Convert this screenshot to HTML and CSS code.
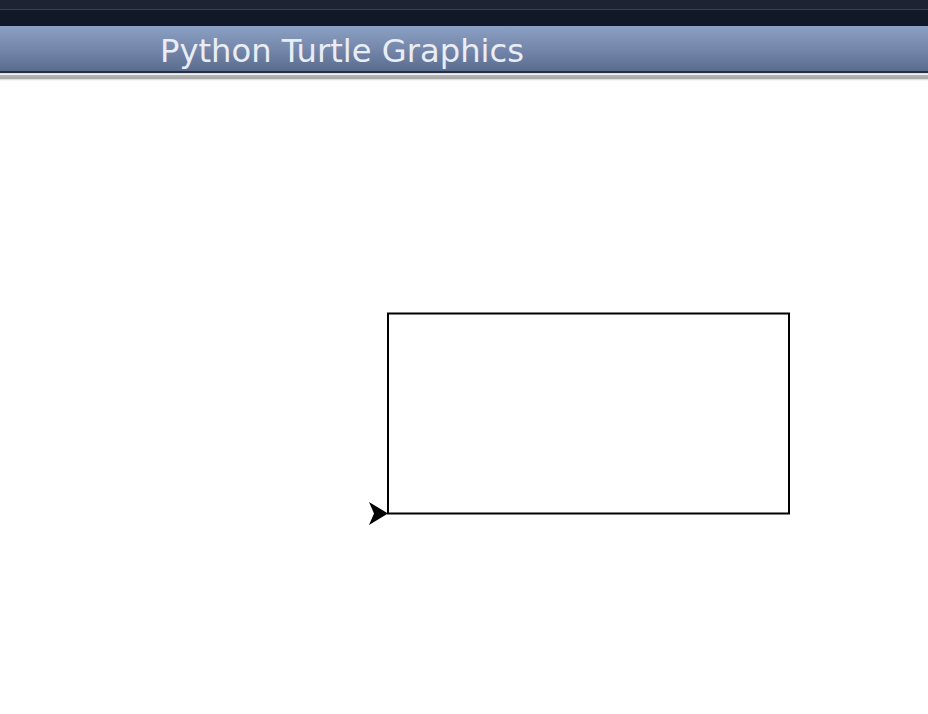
FILE: index.html
```html
<!DOCTYPE html>
<html>
<head>
<meta charset="utf-8">
<title>Python Turtle Graphics</title>
<link rel="stylesheet" href="styles.css">
</head>
<body>
<div class="window">
  <div class="topbar">
    <div class="topbar-upper"></div>
    <div class="topbar-lower"></div>
  </div>
  <div class="titlebar">
    <span class="title">Python Turtle Graphics</span>
  </div>
  <div class="edge"></div>
  <div class="canvas">
    <svg class="drawing" width="928" height="633" viewBox="0 81 928 633" xmlns="http://www.w3.org/2000/svg">
      <rect x="388" y="313.5" width="401" height="200" fill="none" stroke="#000" stroke-width="2"/>
      <polygon points="388,513.5 369,502 374,513.5 369,525" fill="#000"/>
    </svg>
  </div>
</div>
</body>
</html>
```

FILE: styles.css
```css
html, body {
  margin: 0;
  padding: 0;
  background: #ffffff;
}

.window {
  width: 928px;
  height: 714px;
  display: flex;
  flex-direction: column;
  overflow: hidden;
}

.topbar {
  display: flex;
  flex-direction: column;
  flex: none;
}

.topbar-upper {
  height: 9px;
  background: #1e2334;
  border-bottom: 1px solid #3c4353;
}

.topbar-lower {
  height: 16px;
  background: #111828;
}

.titlebar {
  flex: none;
  height: 45px;
  background: linear-gradient(to bottom, #8ba0c4 0%, #7588ab 50%, #5a6d8f 100%);
  border-bottom: 2px solid #283042;
  display: flex;
  align-items: center;
  padding-left: 160px;
}

.title {
  font-family: "DejaVu Sans", "Liberation Sans", sans-serif;
  font-size: 32.2px;
  color: #e9edf5;
  line-height: 1;
  margin-top: 6px;
}

.edge {
  flex: none;
  height: 8px;
  background: linear-gradient(to bottom, #dcdcdc 0px, #dcdcdc 1px, #f2f2f2 1px, #f2f2f2 2px, #b4b4b4 2px, #a8a8a8 6px, #e0e0e0 6px, #e0e0e0 7px, #f6f6f6 7px);
}

.canvas {
  flex: 1;
  background: #ffffff;
}

.drawing {
  display: block;
}
```
